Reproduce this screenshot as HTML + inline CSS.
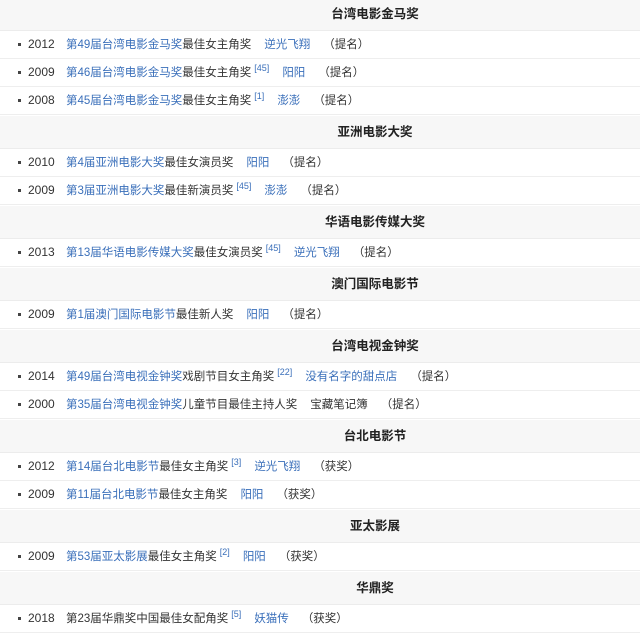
<!DOCTYPE html><html><head><meta charset="utf-8"><style>
body{margin:0;width:640px;height:630px;overflow:hidden;background:#fff;font-family:"Liberation Sans","Noto Sans CJK SC",sans-serif;font-size:11.5px;color:#333}
.w{position:relative;top:-3px}
.h{height:32px;line-height:32px;background:#f7f7f7;border-top:1px solid #fff;border-bottom:1px solid #ececec;text-align:center;padding-left:110px;font-size:12.5px;font-weight:bold;color:#222}
.r{height:27px;line-height:27px;border-bottom:1px solid #eee;padding-left:18px;white-space:nowrap}
.r:before{content:"";display:inline-block;width:3px;height:3px;background:#444;vertical-align:middle;margin-right:7px}
a{color:#3a6fba;text-decoration:none}
.y{display:inline-block;width:38px;font-size:12px}
.g{margin-left:13px}
sup{font-size:9px;color:#3a6fba;vertical-align:5px;line-height:0;margin-left:3px}
</style></head><body><div class="w">
<div class="h">台湾电影金马奖</div>
<div class="r"><span class="y">2012</span><a>第49届台湾电影金马奖</a>最佳女主角奖<a class="g">逆光飞翔</a><span class="g">（提名）</span></div>
<div class="r"><span class="y">2009</span><a>第46届台湾电影金马奖</a>最佳女主角奖<sup>[45]</sup><a class="g">阳阳</a><span class="g">（提名）</span></div>
<div class="r"><span class="y">2008</span><a>第45届台湾电影金马奖</a>最佳女主角奖<sup>[1]</sup><a class="g">澎澎</a><span class="g">（提名）</span></div>
<div class="h">亚洲电影大奖</div>
<div class="r"><span class="y">2010</span><a>第4届亚洲电影大奖</a>最佳女演员奖<a class="g">阳阳</a><span class="g">（提名）</span></div>
<div class="r"><span class="y">2009</span><a>第3届亚洲电影大奖</a>最佳新演员奖<sup>[45]</sup><a class="g">澎澎</a><span class="g">（提名）</span></div>
<div class="h">华语电影传媒大奖</div>
<div class="r"><span class="y">2013</span><a>第13届华语电影传媒大奖</a>最佳女演员奖<sup>[45]</sup><a class="g">逆光飞翔</a><span class="g">（提名）</span></div>
<div class="h">澳门国际电影节</div>
<div class="r"><span class="y">2009</span><a>第1届澳门国际电影节</a>最佳新人奖<a class="g">阳阳</a><span class="g">（提名）</span></div>
<div class="h">台湾电视金钟奖</div>
<div class="r"><span class="y">2014</span><a>第49届台湾电视金钟奖</a>戏剧节目女主角奖<sup>[22]</sup><a class="g">没有名字的甜点店</a><span class="g">（提名）</span></div>
<div class="r"><span class="y">2000</span><a>第35届台湾电视金钟奖</a>儿童节目最佳主持人奖<span class="g">宝藏笔记簿</span><span class="g">（提名）</span></div>
<div class="h">台北电影节</div>
<div class="r"><span class="y">2012</span><a>第14届台北电影节</a>最佳女主角奖<sup>[3]</sup><a class="g">逆光飞翔</a><span class="g">（获奖）</span></div>
<div class="r"><span class="y">2009</span><a>第11届台北电影节</a>最佳女主角奖<a class="g">阳阳</a><span class="g">（获奖）</span></div>
<div class="h">亚太影展</div>
<div class="r"><span class="y">2009</span><a>第53届亚太影展</a>最佳女主角奖<sup>[2]</sup><a class="g">阳阳</a><span class="g">（获奖）</span></div>
<div class="h">华鼎奖</div>
<div class="r"><span class="y">2018</span>第23届华鼎奖中国最佳女配角奖<sup>[5]</sup><a class="g">妖猫传</a><span class="g">（获奖）</span></div>
</div></body></html>
